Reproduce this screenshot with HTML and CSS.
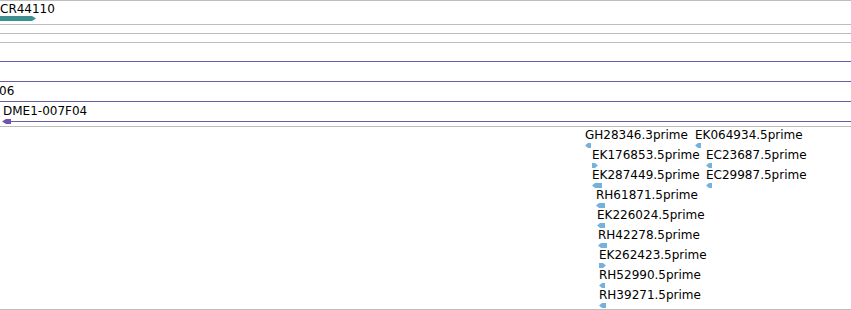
FILE: index.html
```html
<!DOCTYPE html>
<html>
<head>
  <meta charset="utf-8">
  <title>Track View</title>
  <link rel="stylesheet" href="styles.css">
</head>
<body>
  <div class="view">
    <!-- gene models -->
    <div class="track track-genes">
      <div class="lane">
        <div class="feat" style="left:0px">
          <div class="label">CR44110</div>
          <svg class="glyph" width="36" height="5"><polygon class="gene" points="0,0 32,0 36,2.5 32,5 0,5"/></svg>
        </div>
      </div>
    </div>

    <div class="track track-empty"></div>
    <div class="track track-empty"></div>

    <!-- clone spans -->
    <div class="track track-clones">
      <div class="lane"><div class="span"></div></div>
      <div class="lane"><div class="span"></div></div>
      <div class="lane">
        <div class="span"></div>
        <div class="feat" style="left:-1px"><div class="label">06</div></div>
      </div>
      <div class="lane">
        <div class="feat feat-wide" style="left:2px">
          <div class="label">DME1-007F04</div>
          <svg class="glyph" width="849" height="6">
            <polygon class="clone-arrow" points="0,3.5 4,1 9,1 9,6 4,6"/>
            <rect class="clone" x="9" y="3" width="840" height="1"/>
          </svg>
        </div>
      </div>
    </div>

    <!-- EST alignments -->
    <div class="track track-ests">
      <div class="lane">
        <div class="feat" style="left:585px">
          <div class="label">GH28346.3prime</div>
          <svg class="glyph" width="6" height="5"><polygon class="est" points="0,2.5 3,0 6,0 6,5 3,5"/></svg>
        </div>
        <div class="feat" style="left:695px">
          <div class="label">EK064934.5prime</div>
          <svg class="glyph" width="6" height="5"><polygon class="est" points="0,2.5 3,0 6,0 6,5 3,5"/></svg>
        </div>
      </div>
      <div class="lane">
        <div class="feat" style="left:592px">
          <div class="label">EK176853.5prime</div>
          <svg class="glyph" width="6" height="5"><polygon class="est" points="0,0 3,0 6,2.5 3,5 0,5"/></svg>
        </div>
        <div class="feat" style="left:706px">
          <div class="label">EC23687.5prime</div>
          <svg class="glyph" width="6" height="5"><polygon class="est" points="0,2.5 3,0 6,0 6,5 3,5"/></svg>
        </div>
      </div>
      <div class="lane">
        <div class="feat" style="left:592px">
          <div class="label">EK287449.5prime</div>
          <svg class="glyph" width="10" height="5"><polygon class="est" points="0,2.5 3,0 10,0 10,5 3,5"/></svg>
        </div>
        <div class="feat" style="left:706px">
          <div class="label">EC29987.5prime</div>
          <svg class="glyph" width="6" height="5"><polygon class="est" points="0,2.5 3,0 6,0 6,5 3,5"/></svg>
        </div>
      </div>
      <div class="lane">
        <div class="feat" style="left:596px">
          <div class="label">RH61871.5prime</div>
          <svg class="glyph" width="9" height="5"><polygon class="est" points="0,2.5 3,0 9,0 9,5 3,5"/></svg>
        </div>
      </div>
      <div class="lane">
        <div class="feat" style="left:597px">
          <div class="label">EK226024.5prime</div>
          <svg class="glyph" width="8" height="5"><polygon class="est" points="0,2.5 3,0 8,0 8,5 3,5"/></svg>
        </div>
      </div>
      <div class="lane">
        <div class="feat" style="left:598px">
          <div class="label">RH42278.5prime</div>
          <svg class="glyph" width="9" height="5"><polygon class="est" points="0,2.5 3,0 9,0 9,5 3,5"/></svg>
        </div>
      </div>
      <div class="lane">
        <div class="feat" style="left:599px">
          <div class="label">EK262423.5prime</div>
          <svg class="glyph" width="7" height="5"><polygon class="est" points="0,0 4,0 7,2.5 4,5 0,5"/></svg>
        </div>
      </div>
      <div class="lane">
        <div class="feat" style="left:599px">
          <div class="label">RH52990.5prime</div>
          <svg class="glyph" width="6" height="5"><polygon class="est" points="0,2.5 3,0 6,0 6,5 3,5"/></svg>
        </div>
      </div>
      <div class="lane">
        <div class="feat" style="left:599px">
          <div class="label">RH39271.5prime</div>
          <svg class="glyph" width="7" height="5"><polygon class="est" points="0,2.5 3,0 7,0 7,5 3,5"/></svg>
        </div>
      </div>
    </div>
  </div>
</body>
</html>
```

FILE: styles.css
```css
:root {
  --track-border: #bdbdbd;
  --gene: #3d8f90;
  --clone: #6c5ca2;
  --clone-arrow: #7352aa;
  --est: #74b2de;
  --text: #000000;
}

* {
  margin: 0;
  padding: 0;
  box-sizing: border-box;
}

body {
  width: 851px;
  height: 310px;
  overflow: hidden;
  background: #FFFFFF;
  font-family: "DejaVu Sans", sans-serif;
  font-size: 12px;
  color: var(--text);
}

.view {
  border-top: 1px solid var(--track-border);
}

.track {
  position: relative;
  border-bottom: 1px solid var(--track-border);
  overflow: hidden;
}

.track-genes {
  height: 24px;
}

.track-empty {
  height: 9px;
}

.track-clones {
  height: 84px;
}

.track-ests {
  height: 183px;
}

.lane {
  position: relative;
  height: 20px;
}

.feat {
  position: absolute;
  top: 1px;
}

.feat-wide {
  right: 0;
}

.label {
  height: 14px;
  line-height: 14px;
  white-space: nowrap;
}

.feat-wide .label {
  padding-left: 1px;
}

.glyph {
  display: block;
}

.track-ests .glyph {
  margin-top: 1px;
}

.span {
  position: absolute;
  left: 0;
  right: 0;
  top: 18px;
  height: 1px;
  background: var(--clone);
}

.gene {
  fill: var(--gene);
}

.clone {
  fill: var(--clone);
}

.clone-arrow {
  fill: var(--clone-arrow);
}

.est {
  fill: var(--est);
}
```
